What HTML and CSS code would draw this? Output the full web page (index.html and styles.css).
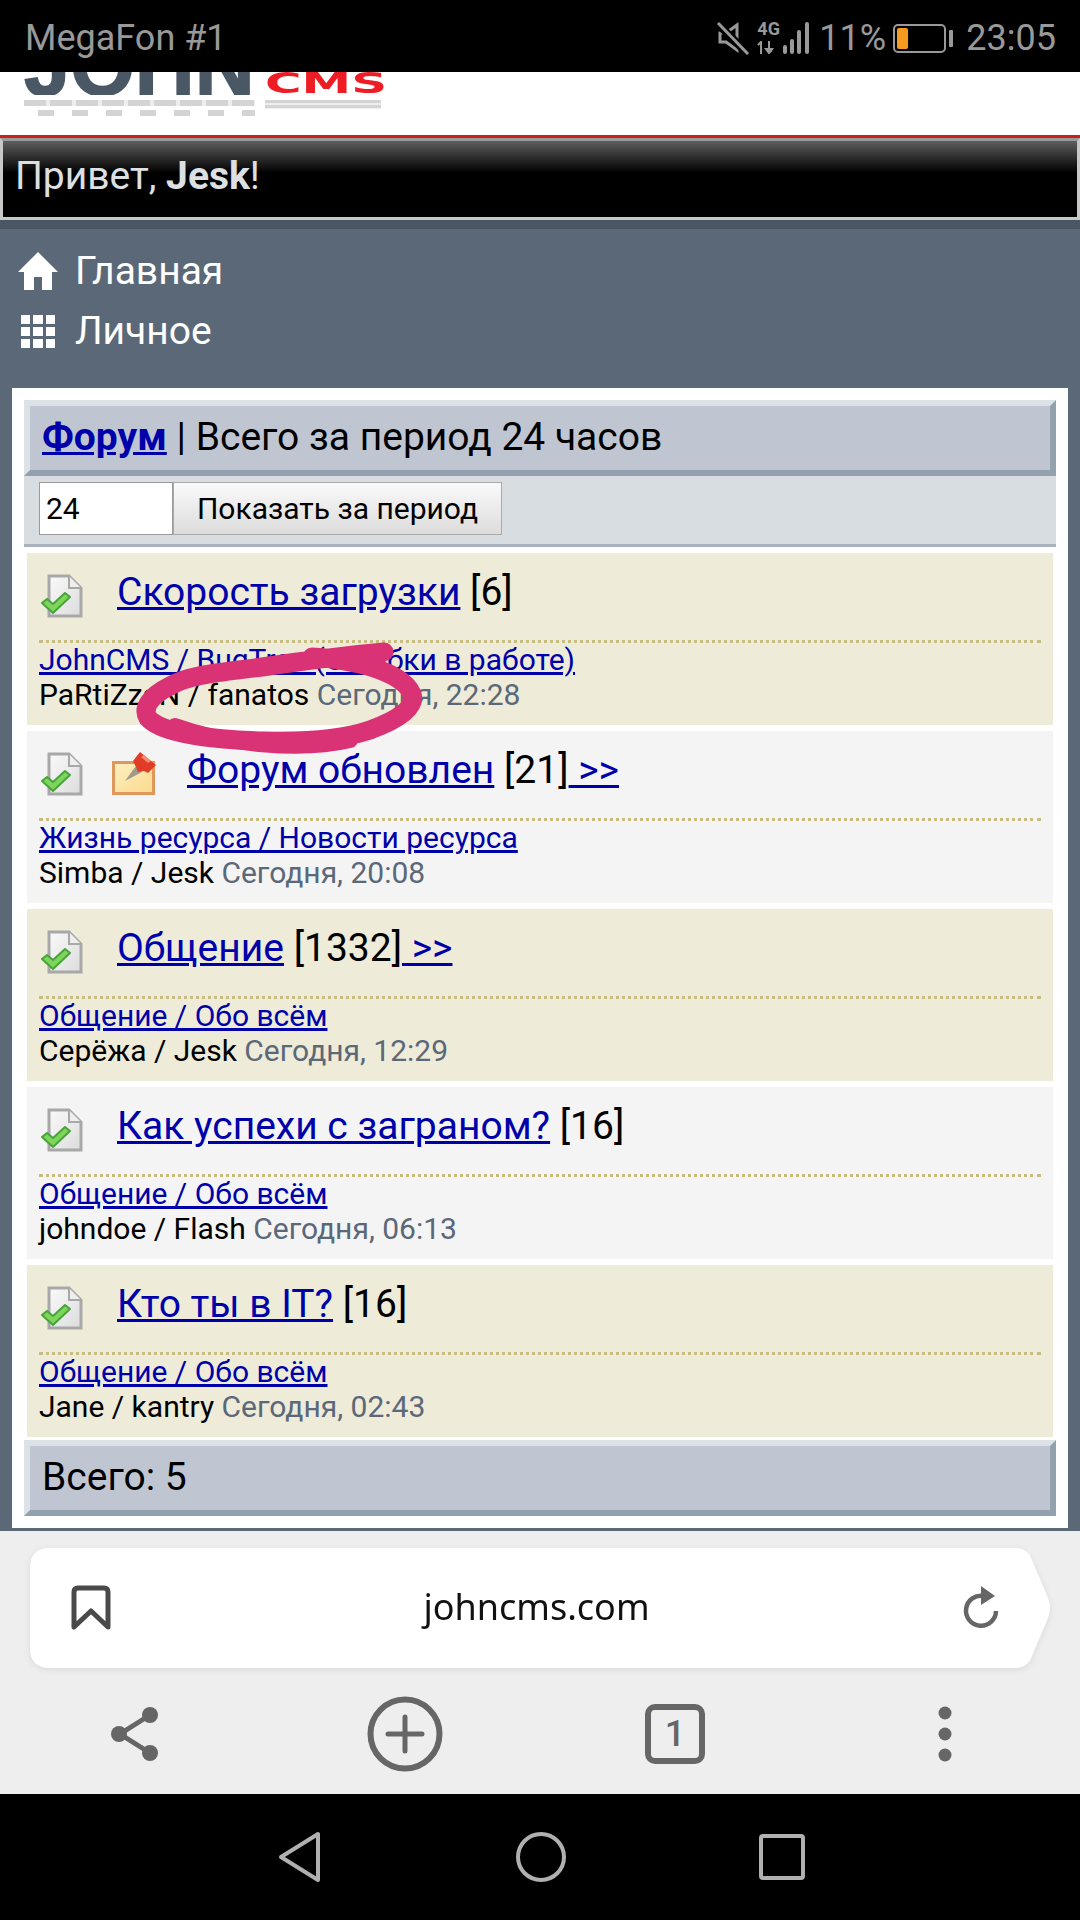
FILE: index.html
```html
<!DOCTYPE html>
<html lang="en">
<head>
    <meta charset="UTF-8">
    <title>johncms.com</title>
    <link rel="stylesheet" href="styles.css">
</head>
<body>
<div class="screen">

    <!-- android status bar -->
    <div class="statusbar">
        <span class="carrier">MegaFon #1</span>
        <div class="status-right">
            <svg class="ic-mute" width="34" height="34" viewBox="0 0 34 34">
                <path d="M4 12h6l11-8v25l-11-8H4z" fill="none" stroke="#999" stroke-width="3"/>
                <path d="M2 3l30 30" stroke="#000" stroke-width="8"/>
                <path d="M2 2l30 31" stroke="#999" stroke-width="3"/>
            </svg>
            <div class="net">
                <span class="net-4g">4G</span>
                <svg width="20" height="13" viewBox="0 0 20 13">
                    <path d="M4 13V1L1 4M12 0v12l3-3M9 8h6l-3 4z" fill="none" stroke="#999" stroke-width="2"/>
                </svg>
            </div>
            <svg class="ic-signal" width="27" height="34" viewBox="0 0 27 34">
                <rect x="0" y="24" width="4" height="9" rx="2" fill="#999"/>
                <rect x="7" y="18" width="4" height="15" rx="2" fill="#999"/>
                <rect x="14" y="9" width="4" height="24" rx="2" fill="#999"/>
                <rect x="22" y="1" width="4" height="32" rx="2" fill="#999"/>
            </svg>
            <span class="pct">11%</span>
            <div class="battery"><div class="battery-fill"></div></div>
            <div class="battery-nub"></div>
            <span class="clock">23:05</span>
        </div>
    </div>

    <!-- site head -->
    <div class="logo">
        <div class="logo-top">
            <div class="logo-john"><span>JOHN</span></div>
            <div class="logo-cms"><span>CMS</span></div>
        </div>
        <div class="logo-shadow">
            <div class="shadow-john"></div>
            <div class="shadow-cms"></div>
        </div>
    </div>
    <div class="redline"></div>
    <div class="greeting">Привет, <b>Jesk</b>!</div>

    <div class="page">
        <div class="menu">
            <div class="menu-item">
                <svg width="40" height="38" viewBox="0 0 40 38">
                    <path d="M20 0L0 20h6v18h10V25h8v13h10V20h6z" fill="#fff"/>
                </svg>
                <span>Главная</span>
            </div>
            <div class="menu-item">
                <svg width="40" height="34" viewBox="0 0 40 34">
                    <g fill="#fff">
                        <rect x="3" y="1" width="9" height="9"/><rect x="15" y="1" width="10" height="9"/><rect x="28" y="1" width="9" height="9"/>
                        <rect x="3" y="13" width="9" height="9"/><rect x="15" y="13" width="10" height="9"/><rect x="28" y="13" width="9" height="9"/>
                        <rect x="3" y="25" width="9" height="9"/><rect x="15" y="25" width="10" height="9"/><rect x="28" y="25" width="9" height="9"/>
                    </g>
                </svg>
                <span>Личное</span>
            </div>
        </div>

        <div class="card">
            <div class="phdr"><a href="#"><b>Форум</b></a> | Всего за период 24 часов</div>
            <div class="gmenu">
                <input class="hours" type="text" value="24">
                <button class="show-btn">Показать за период</button>
            </div>

            <div class="row list1">
                <div class="topic">
                    <svg class="ic-doc" viewBox="0 0 44 44"><use href="#doc"/></svg>
                    <div class="title"><a href="#">Скорость загрузки</a> [6]</div>
                </div>
                <div class="sub">
                    <a href="#">JohnCMS / BugTrac (Ошибки в работе)</a>
                    <div class="who">PaRtiZzaN / fanatos <span class="when">Сегодня, 22:28</span></div>
                </div>
            </div>

            <div class="row list2">
                <div class="topic">
                    <svg class="ic-doc" viewBox="0 0 44 44"><use href="#doc"/></svg>
                    <svg class="ic-pin" viewBox="0 0 44 44">
                        <defs>
                            <linearGradient id="note" x1="0" y1="0" x2="1" y2="1">
                                <stop offset="0" stop-color="#fdf0c4"/>
                                <stop offset="1" stop-color="#fbd98a"/>
                            </linearGradient>
                        </defs>
                        <rect x="1.5" y="10.5" width="40" height="31" fill="url(#note)" stroke="#e0985a" stroke-width="3"/>
                        <path d="M13 29l11-15 6 6z" fill="#a09a8c"/>
                        <path d="M21 9l7-9 16 13-8 8-4-2-6 1-2-5z" fill="#e03c26"/>
                        <path d="M29 5l3-2 7 6-3 2z" fill="#f98a70"/>
                    </svg>
                    <div class="title"><a href="#">Форум обновлен</a> [21]<a href="#">&nbsp;&gt;&gt;</a></div>
                </div>
                <div class="sub">
                    <a href="#">Жизнь ресурса / Новости ресурса</a>
                    <div class="who">Simba / Jesk <span class="when">Сегодня, 20:08</span></div>
                </div>
            </div>

            <div class="row list1">
                <div class="topic">
                    <svg class="ic-doc" viewBox="0 0 44 44"><use href="#doc"/></svg>
                    <div class="title"><a href="#">Общение</a> [1332]<a href="#">&nbsp;&gt;&gt;</a></div>
                </div>
                <div class="sub">
                    <a href="#">Общение / Обо всём</a>
                    <div class="who">Серёжа / Jesk <span class="when">Сегодня, 12:29</span></div>
                </div>
            </div>

            <div class="row list2">
                <div class="topic">
                    <svg class="ic-doc" viewBox="0 0 44 44"><use href="#doc"/></svg>
                    <div class="title"><a href="#">Как успехи с заграном?</a> [16]</div>
                </div>
                <div class="sub">
                    <a href="#">Общение / Обо всём</a>
                    <div class="who">johndoe / Flash <span class="when">Сегодня, 06:13</span></div>
                </div>
            </div>

            <div class="row list1">
                <div class="topic">
                    <svg class="ic-doc" viewBox="0 0 44 44"><use href="#doc"/></svg>
                    <div class="title"><a href="#">Кто ты в IT?</a> [16]</div>
                </div>
                <div class="sub">
                    <a href="#">Общение / Обо всём</a>
                    <div class="who">Jane / kantry <span class="when">Сегодня, 02:43</span></div>
                </div>
            </div>

            <div class="phdr total">Всего: 5</div>
        </div>
    </div>

    <!-- browser chrome -->
    <div class="browser">
        <div class="address-wrap">
            <div class="address">
                <svg width="40" height="46" viewBox="0 0 40 46">
                    <path d="M3 42V7q0-4 4-4h26q4 0 4 4v35L20 26z" fill="none" stroke="#4a4a4a" stroke-width="5" stroke-linejoin="round"/>
                </svg>
                <span class="url">johncms.com</span>
                <svg width="38" height="44" viewBox="0 0 38 44">
                    <path d="M22 10A15 15 0 1 0 34 25" fill="none" stroke="#666" stroke-width="4.5"/>
                    <path d="M19 0l14 10-14 9z" fill="#666"/>
                </svg>
            </div>
        </div>
        <div class="toolbar">
            <svg width="50" height="56" viewBox="0 0 50 56">
                <path d="M40 9L10 28l30 19" fill="none" stroke="#666" stroke-width="5"/>
                <circle cx="40" cy="9" r="8" fill="#666"/>
                <circle cx="9" cy="28" r="8" fill="#666"/>
                <circle cx="40" cy="47" r="8" fill="#666"/>
            </svg>
            <svg width="76" height="76" viewBox="0 0 76 76">
                <circle cx="38" cy="38" r="34.5" fill="none" stroke="#666" stroke-width="6"/>
                <path d="M38 21v34M21 38h34" stroke="#666" stroke-width="5" stroke-linecap="round"/>
            </svg>
            <div class="tabs">1</div>
            <svg width="14" height="56" viewBox="0 0 14 56">
                <circle cx="7" cy="7" r="6.5" fill="#666"/>
                <circle cx="7" cy="28" r="6.5" fill="#666"/>
                <circle cx="7" cy="49" r="6.5" fill="#666"/>
            </svg>
        </div>
    </div>

    <!-- android nav bar -->
    <div class="navbar">
        <svg width="46" height="52" viewBox="0 0 46 52">
            <path d="M41 3v46L4 26z" fill="none" stroke="#b0b0b0" stroke-width="4" stroke-linejoin="round"/>
        </svg>
        <svg width="50" height="50" viewBox="0 0 50 50">
            <circle cx="25" cy="25" r="23" fill="none" stroke="#b0b0b0" stroke-width="4"/>
        </svg>
        <svg width="46" height="46" viewBox="0 0 46 46">
            <rect x="2" y="2" width="42" height="42" rx="2" fill="none" stroke="#b0b0b0" stroke-width="4"/>
        </svg>
    </div>

    <!-- marker scribble drawn over the screenshot -->
    <svg class="scribble" width="1080" height="1920" viewBox="0 0 1080 1920">
        <path d="M384 652C350 655 310 660 262 667C225 672 190 674 170 686C150 696 142 708 148 718C162 734 215 740 265 741C300 742 340 740 370 730C398 720 416 708 412 694C406 680 385 670 360 664C345 661 325 657 312 657" fill="none" stroke="#d93275" stroke-width="19" stroke-linecap="round" stroke-linejoin="round"/>
        <path d="M175 726C225 744 300 752 350 740" fill="none" stroke="#d93275" stroke-width="16" stroke-linecap="round"/>
    </svg>

    <svg width="0" height="0" class="defs">
        <defs>
            <linearGradient id="page" x1="0" y1="0" x2="1" y2="1">
                <stop offset="0" stop-color="#fafafa"/>
                <stop offset="1" stop-color="#dcdcdc"/>
            </linearGradient>
            <symbol id="doc" viewBox="0 0 44 44">
                <path d="M9 2h20l12 12v28H9z" fill="url(#page)" stroke="#a8a8a8" stroke-width="3"/>
                <path d="M29 2v12h12" fill="#eee" stroke="#a8a8a8" stroke-width="2"/>
                <path d="M2 29l5-4 6 5L25 19l5 4-17 16z" fill="#7fd45c" stroke="#46a53a" stroke-width="2" stroke-linejoin="round"/>
            </symbol>
        </defs>
    </svg>
</div>
</body>
</html>
```

FILE: styles.css
```css
* {
    margin: 0;
    padding: 0;
    box-sizing: border-box;
}

body {
    background: #000;
    font-family: Roboto, sans-serif;
}

a {
    color: #0000aa;
}

.screen {
    position: relative;
    width: 1080px;
    height: 1920px;
    display: flex;
    flex-direction: column;
    overflow: hidden;
}

/* status bar */
.statusbar {
    height: 72px;
    background: #000;
    color: #999;
    display: flex;
    justify-content: space-between;
    align-items: center;
    padding: 4px 24px 0 25px;
    font-size: 36px;
}

.status-right {
    display: flex;
    align-items: center;
}

.ic-mute {
    margin-right: 7px;
}

.net {
    width: 20px;
    display: flex;
    flex-direction: column;
    margin-right: 6px;
    gap: 5px;
}

.net-4g {
    font-size: 18px;
    line-height: 14px;
    font-weight: 700;
}

.pct {
    margin-left: 9px;
    width: 74px;
}

.battery {
    width: 53px;
    height: 29px;
    border: 2px solid #999;
    border-radius: 5px;
    padding: 2px;
}

.battery-fill {
    width: 11px;
    height: 100%;
    background: #f79a20;
    border-radius: 2px;
}

.battery-nub {
    width: 4px;
    height: 17px;
    background: #999;
    margin-left: 3px;
    margin-right: 13px;
    border-radius: 1px;
}

/* logo */
.logo {
    height: 63px;
    background: #fff;
    padding-left: 24px;
    overflow: hidden;
}

.logo-top {
    display: flex;
    height: 23px;
}

.logo-john {
    width: 241px;
    height: 23px;
    overflow: hidden;
    font: 700 83px "Liberation Sans", sans-serif;
    color: #4a5866;
    -webkit-text-stroke: 1.5px #4a5866;
}

.logo-john span {
    display: block;
    line-height: 0;
    margin-top: -5px;
}

.logo-cms {
    font: 700 28px "DejaVu Sans", sans-serif;
    color: #ee1c25;
    line-height: 22px;
    padding-top: 1px;
}

.logo-cms span {
    display: block;
    transform: scaleX(1.78);
    transform-origin: left;
}

.logo-shadow {
    display: flex;
    margin-top: 5px;
}

.shadow-john {
    width: 231px;
    height: 16px;
    margin-right: 10px;
    background:
        repeating-linear-gradient(90deg, #fff 0 14px, #d4d4d4 14px 30px, #fff 30px 34px) 0 10px / 100% 6px no-repeat,
        repeating-linear-gradient(90deg, #d4d4d4 0 22px, #eee 22px 26px) 0 0 / 100% 6px no-repeat;
}

.shadow-cms {
    width: 116px;
    height: 9px;
    background: repeating-linear-gradient(#d4d4d4 0 3px, #eee 3px 5px);
}

.redline {
    height: 3px;
    background: #c8201e;
}

.greeting {
    height: 82px;
    border: 3px solid #c8c8c8;
    border-top-color: #999;
    background: linear-gradient(#5e5e5e 0, #000 42%);
    color: #dde0e3;
    font-size: 39px;
    line-height: 70px;
    padding-left: 12px;
}

/* page body */
.page {
    height: 1311px;
    background: #5a6878;
    border-top: 9px solid #4a5663;
    padding: 0 12px;
}

.menu {
    height: 159px;
    padding-top: 12px;
}

.menu-item {
    height: 60px;
    display: flex;
    align-items: center;
    gap: 17px;
    padding-left: 6px;
    color: #fff;
    font-size: 39px;
}

.card {
    height: 1140px;
    background: #fff;
    padding: 12px;
}

.phdr {
    height: 76px;
    background: #bfc6d1;
    border: 6px solid;
    border-color: #dde2e7 #93a1ae #93a1ae #dde2e7;
    font-size: 39px;
    line-height: 62px;
    padding-left: 12px;
    color: #000;
}

.gmenu {
    height: 71px;
    background: #d8dde2;
    border-bottom: 3px solid #a8b2bc;
    padding: 6px 15px 0;
    display: flex;
}

.hours {
    width: 134px;
    height: 53px;
    border: 1px solid #999;
    padding-left: 6px;
    font: 30px Roboto, sans-serif;
    color: #000;
    background: #fff;
}

.show-btn {
    width: 329px;
    height: 53px;
    border: 1px solid #aaa;
    background: linear-gradient(#fafafa, #dcdcdc);
    font: 30px Roboto, sans-serif;
    color: #000;
}

.row {
    height: 172px;
    margin: 6px 3px 0;
    padding: 0 12px;
}

.list1 {
    background: #eeebd8;
}

.list2 {
    background: #f4f4f4;
}

.topic {
    height: 90px;
    display: flex;
    align-items: flex-start;
    padding-top: 21px;
    border-bottom: 3px dotted #c8bd80;
}

.ic-doc, .ic-pin {
    width: 44px;
    height: 44px;
    flex: none;
    filter: blur(0.5px);
}

.ic-doc {
    margin-left: 1px;
    margin-right: 33px;
}

.ic-pin {
    margin-left: -5px;
    margin-right: 31px;
}

.title {
    font-size: 39px;
    line-height: 36px;
    color: #000;
}

.sub {
    font-size: 30px;
    line-height: 35px;
    margin-top: -1px;
    color: #000;
}

.when {
    color: #5a6878;
}

.total {
    margin-top: 3px;
}

/* browser */
.browser {
    height: 263px;
    background: #eeeeee;
    padding-top: 17px;
}

.address-wrap {
    filter: drop-shadow(0 2px 3px rgba(0, 0, 0, 0.08));
}

.address {
    width: 1020px;
    height: 120px;
    margin-left: 30px;
    background: #fff;
    clip-path: path("M20 0H985Q998 0 1002 12L1018 50Q1022 60 1018 70L1002 108Q998 120 985 120H20Q0 120 0 100V20Q0 0 20 0Z");
    display: flex;
    align-items: center;
    padding: 0 50px 0 41px;
    justify-content: space-between;
}

.url {
    font: 36px "Noto Sans", sans-serif;
    color: #111;
    margin-top: -4px;
}

.toolbar {
    display: grid;
    grid-template-columns: repeat(4, 270px);
    justify-items: center;
    align-items: center;
    height: 75px;
    margin-top: 28px;
}

.tabs {
    width: 60px;
    height: 60px;
    border: 6px solid #666;
    border-radius: 10px;
    color: #666;
    font-size: 36px;
    font-weight: 500;
    line-height: 48px;
    text-align: center;
}

.navbar {
    height: 126px;
    background: #000;
    display: flex;
    align-items: center;
    justify-content: space-between;
    padding: 0 275px 0 277px;
}

.scribble {
    position: absolute;
    left: 0;
    top: 0;
    pointer-events: none;
}

.defs {
    position: absolute;
}
```
